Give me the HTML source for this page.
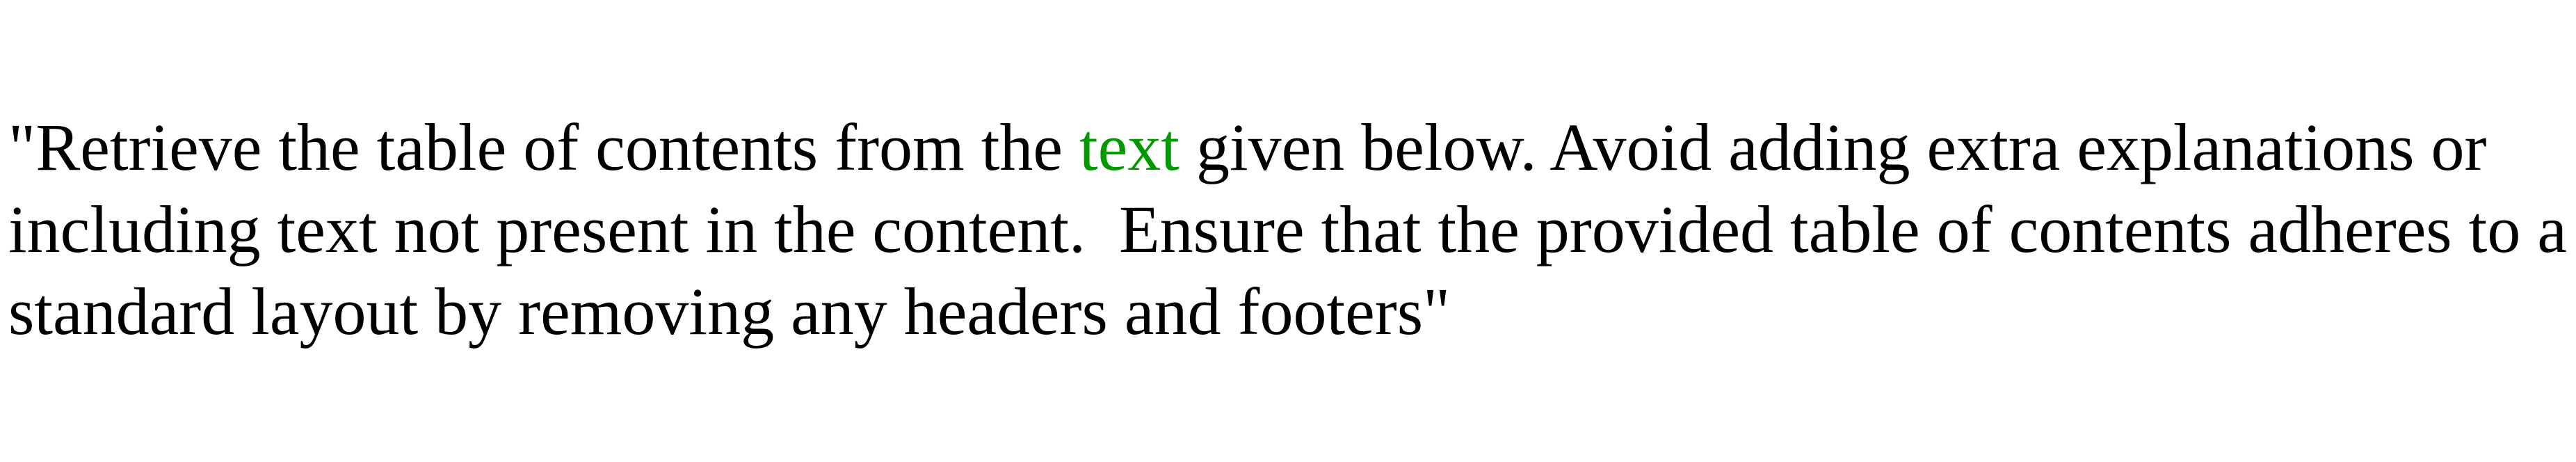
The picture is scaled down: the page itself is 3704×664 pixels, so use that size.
<!DOCTYPE html>
<html><head><style>
html,body{margin:0;padding:0;background:#fff;width:3704px;height:664px;overflow:hidden}
.t{position:absolute;left:12px;top:153px;font-family:"Liberation Serif",serif;font-size:96px;line-height:118px;color:#000;white-space:nowrap}
.g{color:#009900}
</style></head><body>
<div class="t">"Retrieve the table of contents from the <span class="g">text</span> given below. Avoid adding extra explanations or<br>including text not present in the content.&nbsp; Ensure that the provided table of contents adheres to a<br>standard layout by removing any headers and footers"</div>
</body></html>
